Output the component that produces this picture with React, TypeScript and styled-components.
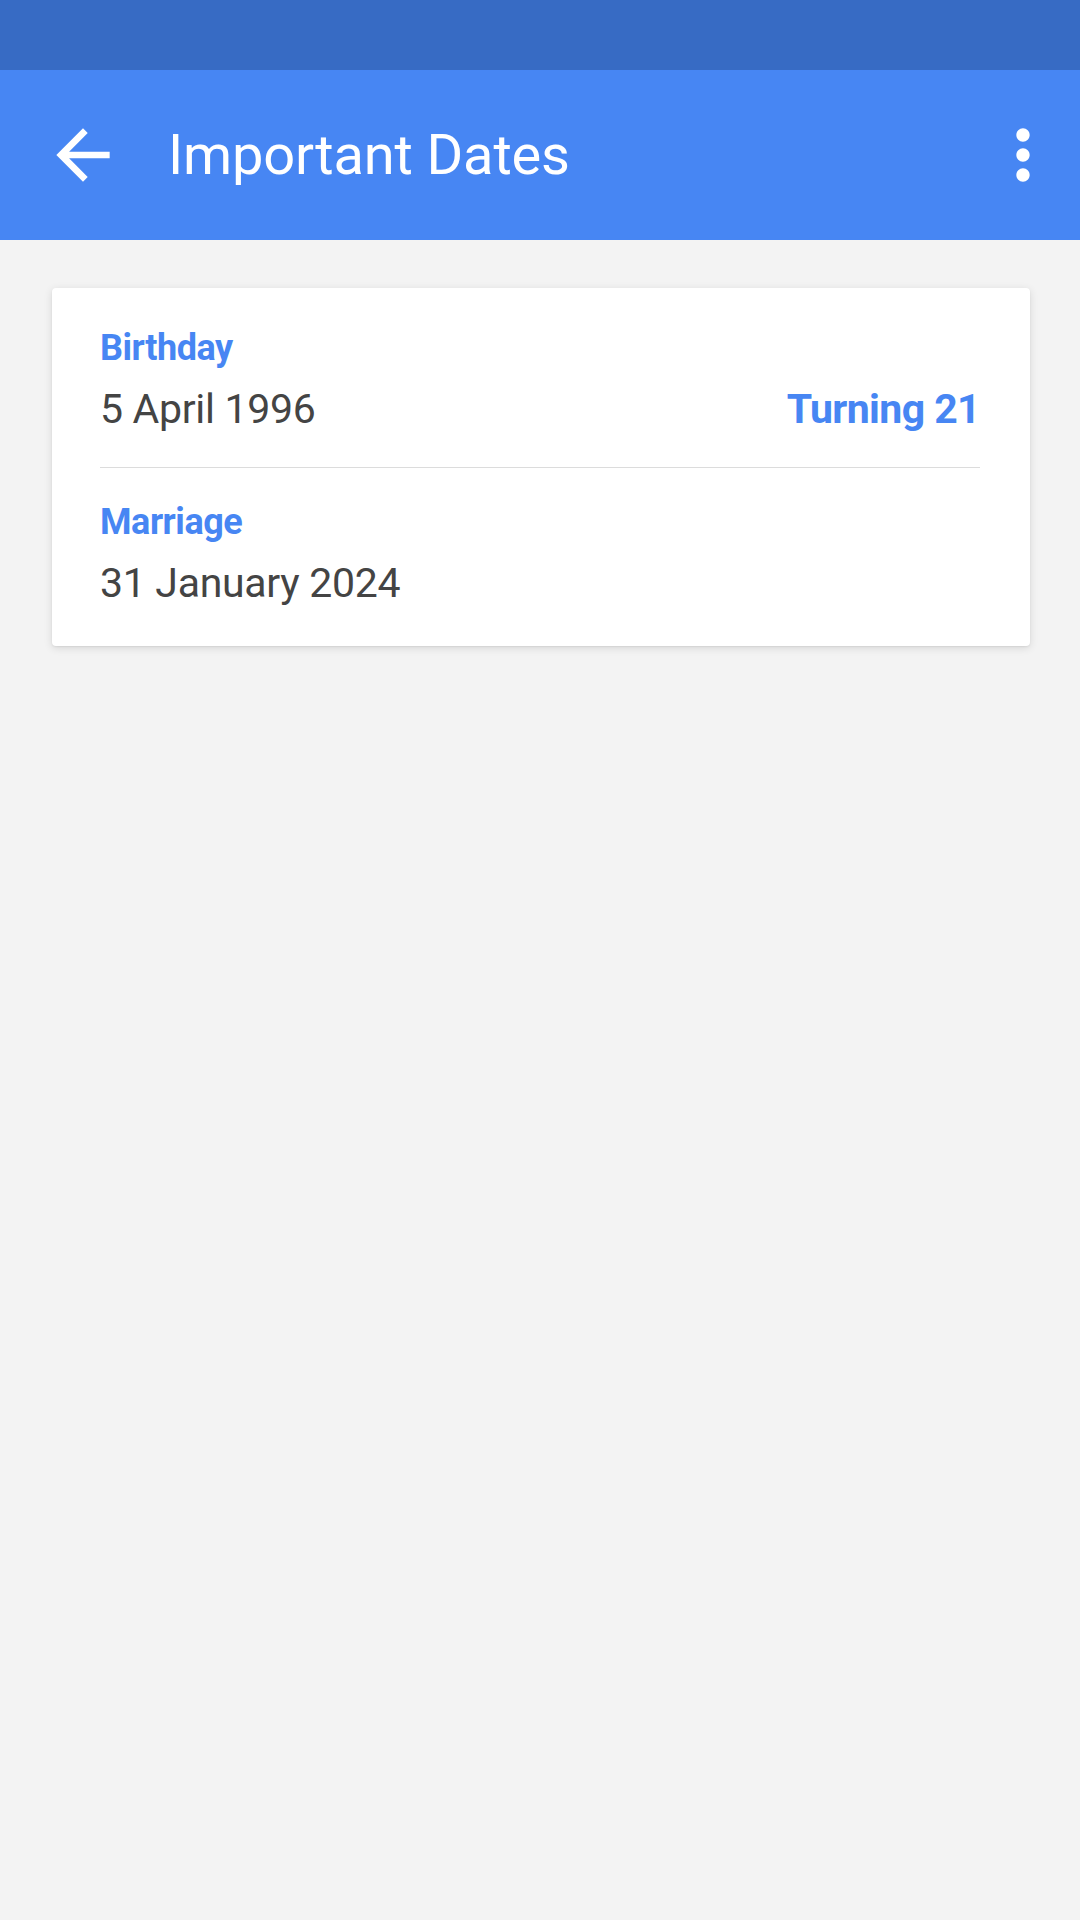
import styled, { createGlobalStyle } from 'styled-components';

const blue = '#4786f3';

const GlobalStyle = createGlobalStyle`
  html, body {
    margin: 0;
    padding: 0;
    background: #f3f3f3;
    font-family: Roboto, "Liberation Sans", sans-serif;
  }
`;

const dates = [
  { label: 'Birthday', date: '5 April 1996', note: 'Turning 21' },
  { label: 'Marriage', date: '31 January 2024' },
];

const App = () => {
  return (
    <Screen>
      <GlobalStyle />
      <StatusBar />
      <AppBar>
        <IconButton aria-label="back">
          <svg width="80" height="80" viewBox="0 0 24 24" fill="#fff">
            <path d="M20 11H7.83l5.59-5.59L12 4l-8 8 8 8 1.41-1.41L7.83 13H20v-2z" />
          </svg>
        </IconButton>
        <Title>Important Dates</Title>
        <IconButton aria-label="more">
          <svg width="80" height="80" viewBox="0 0 24 24" fill="#fff">
            <path d="M12 8c1.1 0 2-.9 2-2s-.9-2-2-2-2 .9-2 2 .9 2 2 2zm0 2c-1.1 0-2 .9-2 2s.9 2 2 2 2-.9 2-2-.9-2-2-2zm0 6c-1.1 0-2 .9-2 2s.9 2 2 2 2-.9 2-2-.9-2-2-2z" />
          </svg>
        </IconButton>
      </AppBar>
      <Content>
        <Card>
          {dates.map((d) => (
            <Item key={d.label}>
              <Label>{d.label}</Label>
              <Row>
                <DateText>{d.date}</DateText>
                {d.note && <Note>{d.note}</Note>}
              </Row>
            </Item>
          ))}
        </Card>
      </Content>
    </Screen>
  );
};

export default App;

const Screen = styled.div`
  min-height: 1920px;
  background: #f3f3f3;
`;

const StatusBar = styled.div`
  height: 70px;
  background: #376bc4;
`;

const AppBar = styled.div`
  height: 170px;
  background: ${blue};
  display: flex;
  align-items: center;
  padding: 0 17px 0 43px;
`;

const IconButton = styled.div`
  width: 80px;
  height: 80px;
  display: flex;
  align-items: center;
  justify-content: center;
`;

const Title = styled.div`
  flex: 1;
  margin-left: 45px;
  color: #fff;
  font-size: 56px;
  font-weight: 400;
  line-height: 80px;
  letter-spacing: -0.15px;
`;

const Content = styled.div`
  padding: 48px 50px 0 52px;
`;

const Card = styled.div`
  background: #fff;
  border-radius: 4px;
  box-shadow: 0 2px 8px rgba(0, 0, 0, 0.12), 0 1px 2px rgba(0, 0, 0, 0.06);
  padding: 6px 50px 5px 48px;
`;

const Item = styled.div`
  padding: 30px 0;
  & + & {
    border-top: 1px solid #dcdcdc;
  }
`;

const Label = styled.div`
  color: ${blue};
  font-size: 36px;
  font-weight: 700;
  line-height: 48px;
  letter-spacing: -0.45px;
  margin-bottom: 9px;
`;

const Row = styled.div`
  display: flex;
  justify-content: space-between;
  align-items: center;
  height: 56px;
`;

const DateText = styled.div`
  color: #444;
  font-size: 41px;
  line-height: 56px;
  letter-spacing: -0.3px;
`;

const Note = styled.div`
  color: ${blue};
  font-size: 41px;
  font-weight: 700;
  line-height: 56px;
  letter-spacing: -0.6px;
`;
